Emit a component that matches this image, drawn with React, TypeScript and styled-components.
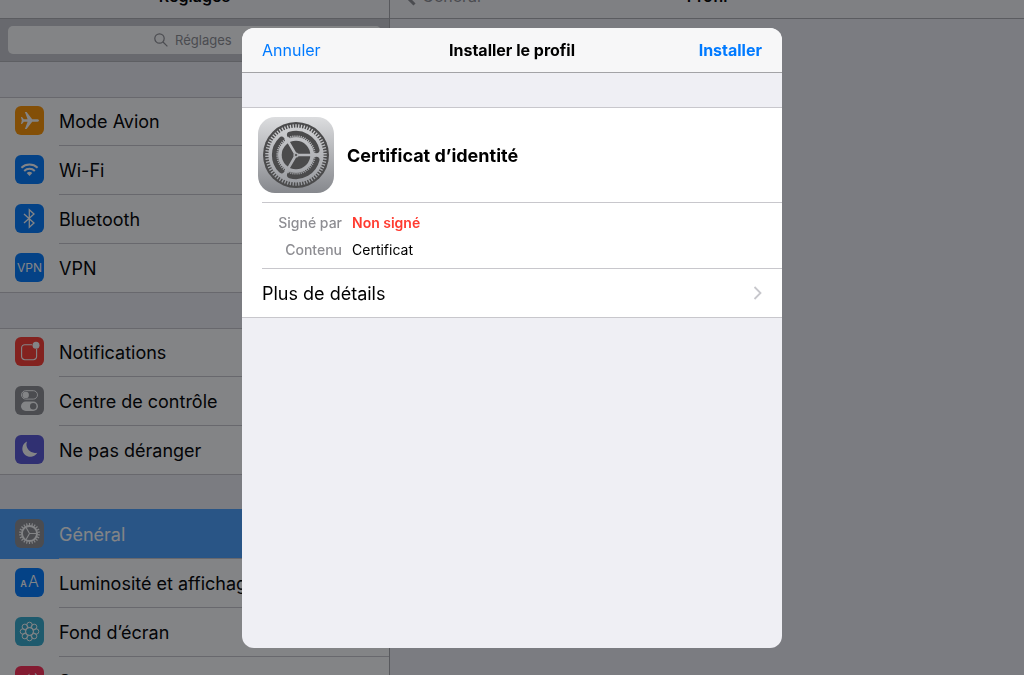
import React from "react";
import styled, { createGlobalStyle } from "styled-components";

const GlobalStyle = createGlobalStyle`
  *, *::before, *::after { box-sizing: border-box; }
  html, body, #root { height: 100%; }
  body {
    margin: 0;
    overflow: hidden;
    background: #efeff4;
    color: #000;
    font-family: Inter, "Liberation Sans", sans-serif;
  }
  h1, h2, p, dl, dd, dt, ul { margin: 0; padding: 0; }
  button { font: inherit; border: 0; background: none; padding: 0; }
`;

const Screen = styled.div`
  display: flex;
  height: 100%;
  overflow: hidden;
`;

const Sidebar = styled.aside`
  flex: 0 0 390px;
  border-right: 1px solid #a8a8ad;
  overflow: hidden;
`;

const Detail = styled.main`
  flex: 1;
  min-width: 0;
`;

const TopBar = styled.header`
  display: grid;
  grid-template-columns: 1fr auto 1fr;
  grid-template-rows: 18px;
  align-items: end;
  height: 19px;
  overflow: hidden;
  background: #f7f7f8;
  border-bottom: 1px solid #aeaeb3;
`;

const TopTitle = styled.h2`
  grid-column: 2;
  font-size: 16px;
  line-height: 44px;
  font-weight: 600;
`;

const BackButton = styled.button`
  display: flex;
  align-items: center;
  gap: 6px;
  height: 44px;
  padding-left: 14px;
  color: #8e8e93;
  font-size: 16px;
`;

const SearchBar = styled.div`
  padding: 7px 8px;
  background: #c9c9ce;
  border-bottom: 1px solid #b4b4b9;
`;

const SearchField = styled.label`
  display: flex;
  align-items: center;
  justify-content: center;
  gap: 7px;
  height: 28px;
  border-radius: 5px;
  background: #fff;
`;

const SearchInput = styled.input`
  width: 60px;
  border: 0;
  padding: 0;
  outline: 0;
  background: none;
  font-family: inherit;
  font-size: 13px;
  line-height: 20px;
  &::placeholder { color: #8e8e93; opacity: 1; }
`;

const Group = styled.ul`
  list-style: none;
  margin-top: 35px;
  background: #fff;
  border-top: 1px solid #c8c7cc;
  border-bottom: 1px solid #c8c7cc;
`;

const RowLabel = styled.span`
  flex: 1;
  display: flex;
  align-items: center;
  border-bottom: 1px solid #c8c7cc;
  font-size: 18px;
  white-space: nowrap;
`;

const RowItem = styled.li`
  &:first-child { margin-top: -1px; }
  &:last-child { height: 48px; }
  &:last-child ${RowLabel} { border-bottom-color: transparent; }
`;

const RowLink = styled.a<{ $selected?: boolean }>`
  display: flex;
  height: 49px;
  padding-left: 15px;
  gap: 15px;
  text-decoration: none;
  color: ${(p) => (p.$selected ? "#fff" : "#000")};
  background: ${(p) => (p.$selected ? "#4ba1ff" : "transparent")};
  box-shadow: ${(p) => (p.$selected ? "0 -1px #4ba1ff" : "none")};
`;

const IconTile = styled.span<{ $color: string }>`
  flex: none;
  display: grid;
  place-items: center;
  width: 29px;
  height: 29px;
  margin-top: 9px;
  border-radius: 6px;
  background: ${(p) => p.$color};
  color: #fff;
  font-size: 12px;
  svg { display: block; }
`;

const Backdrop = styled.div`
  position: fixed;
  inset: 0;
  display: flex;
  justify-content: center;
  align-items: flex-start;
  padding: 28px 16px 27px;
  background: rgba(8, 10, 14, 0.5);
`;

const Dialog = styled.section`
  width: 100%;
  max-width: 540px;
  height: 100%;
  max-height: 620px;
  overflow: hidden;
  border-radius: 12px;
  background: #efeff4;
`;

const DialogBar = styled.header`
  display: grid;
  grid-template-columns: 1fr auto 1fr;
  align-items: center;
  height: 45px;
  padding: 0 20px;
  background: #f7f7f8;
  border-bottom: 1px solid #a3a3a6;
`;

const DialogTitle = styled.h1`
  font-size: 16px;
  font-weight: 700;
`;

const BarButton = styled.button<{ $strong?: boolean }>`
  justify-self: ${(p) => (p.$strong ? "end" : "start")};
  color: #007aff;
  font-size: 16px;
  font-weight: ${(p) => (p.$strong ? 700 : 400)};
`;

const Card = styled.div`
  margin-top: 34px;
  padding-left: 20px;
  background: #fff;
  border-top: 1px solid #c8c7cc;
  border-bottom: 1px solid #c8c7cc;
`;

const ProfileHead = styled.div`
  display: flex;
  align-items: center;
  gap: 13px;
  height: 94px;
  margin-left: -4px;
  svg { flex: none; }
`;

const ProfileName = styled.h2`
  font-size: 18px;
  font-weight: 700;
`;

const Facts = styled.dl`
  display: grid;
  grid-template-columns: 80px 1fr;
  column-gap: 10px;
  row-gap: 7px;
  padding: 10px 0 8px;
  border-top: 1px solid #c8c7cc;
  border-bottom: 1px solid #c8c7cc;
  font-size: 14px;
  line-height: 20px;
`;

const FactName = styled.dt`
  text-align: right;
  font-weight: 500;
  color: #8e8e93;
`;

const FactValue = styled.dd<{ $alert?: boolean }>`
  font-weight: ${(p) => (p.$alert ? 600 : 400)};
  color: ${(p) => (p.$alert ? "#ff3b30" : "#000")};
`;

const MoreButton = styled.button`
  display: flex;
  align-items: center;
  justify-content: space-between;
  width: 100%;
  height: 48px;
  padding-right: 20px;
  font-size: 18px;
  color: #000;
`;

const ring = (n: number, r1: number, r2: number, c: number, phase = 0) =>
  Array.from({ length: n }, (_, i) => {
    const a = ((i + phase) / n) * Math.PI * 2;
    const x = Math.cos(a);
    const y = Math.sin(a);
    return `M${(c + x * r1).toFixed(2)} ${(c + y * r1).toFixed(2)}L${(c + x * r2).toFixed(2)} ${(c + y * r2).toFixed(2)}`;
  }).join("");

const arc = (r: number, from: number, to: number, c: number) => {
  const p = (d: number) => {
    const a = (d * Math.PI) / 180;
    return `${(c + Math.cos(a) * r).toFixed(2)} ${(c + Math.sin(a) * r).toFixed(2)}`;
  };
  return `M${p(from)}A${r} ${r} 0 0 1 ${p(to)}`;
};

const SettingsLogo = () => (
  <svg width="76" height="76" viewBox="0 0 76 76" aria-hidden="true">
    <defs>
      <linearGradient id="plate" x1="0" y1="0" x2="0" y2="1">
        <stop offset="0" stopColor="#dcdddf" />
        <stop offset="1" stopColor="#86888d" />
      </linearGradient>
      <linearGradient id="metal" gradientUnits="userSpaceOnUse" x1="0" y1="5" x2="0" y2="71">
        <stop offset="0" stopColor="#d2d3d5" />
        <stop offset="1" stopColor="#96989d" />
      </linearGradient>
    </defs>
    <rect width="76" height="76" rx="17" fill="url(#plate)" />
    <circle cx="38" cy="38" r="33" fill="#4b4b4c" />
    <path d={ring(66, 26, 30.8, 38, 0.5)} stroke="url(#metal)" strokeWidth="1.3" />
    <circle cx="38" cy="38" r="27.6" fill="url(#metal)" />
    <g fill="none" stroke="#4b4b4c" strokeWidth="6.6" strokeLinecap="round">
      <path d={arc(20.8, 14, 106, 38)} />
      <path d={arc(20.8, 134, 226, 38)} />
      <path d={arc(20.8, 254, 346, 38)} />
    </g>
    <path d={ring(56, 16, 19.6, 38, 0.5)} stroke="url(#metal)" strokeWidth="1.1" />
    <circle cx="38" cy="38" r="15.9" fill="none" stroke="url(#metal)" strokeWidth="3.4" />
    <circle cx="38" cy="38" r="14.3" fill="#4b4b4c" />
    <path d={ring(3, 0, 23, 38)} stroke="url(#metal)" strokeWidth="2.6" />
    <circle cx="38" cy="38" r="2.6" fill="#a9abae" />
    <circle cx="38" cy="38" r="1.1" fill="#4b4b4c" />
  </svg>
);

const Airplane = () => (
  <svg width="29" height="29" viewBox="0 0 29 29" fill="#fff">
    <path d="M24 14.5c0-.9-1-1.3-2.2-1.3h-4.6L11.600 6H9.900l2.700 7.200H8.800L7 11H6l.8 3.500L6 18h1l1.800-2.200h3.800L9.900 23h1.700l5.600-7.200h4.600c1.200 0 2.200-.4 2.200-1.300z" />
  </svg>
);

const Wifi = () => (
  <svg width="29" height="29" viewBox="0 0 29 29" fill="none" stroke="#fff" strokeWidth="2">
    <path d="M6.400 12.800a11.800 11.800 0 0 1 16.200 0" />
    <path d="M9.200 15.900a7.700 7.700 0 0 1 10.600 0" />
    <path d="M14.500 20.900l-2.800-2.900a4.200 4.200 0 0 1 5.600 0z" fill="#fff" stroke="none" />
  </svg>
);

const Bluetooth = () => (
  <svg width="29" height="29" viewBox="0 0 29 29" fill="none" stroke="#fff" strokeWidth="1.300">
    <path d="M9 9.900l10 9.200-4.700 4.100V5.800l4.700 4.100L9 19.100" />
  </svg>
);

const Notifications = () => (
  <svg width="29" height="29" viewBox="0 0 29 29" fill="none">
    <path d="M17 7.700h-7.200a3.200 3.200 0 0 0-3.200 3.200v8.600a3.200 3.200 0 0 0 3.200 3.200h8.600a3.200 3.200 0 0 0 3.200-3.200V12" stroke="#fff" strokeWidth="1.100" />
    <circle cx="21" cy="8.300" r="3.500" fill="#fff" />
  </svg>
);

const Toggles = () => (
  <svg width="29" height="29" viewBox="0 0 29 29">
    <rect x="6.500" y="4.700" width="16" height="8.400" rx="4.200" fill="none" stroke="#fff" />
    <circle cx="10.700" cy="8.900" r="3.200" fill="#fff" />
    <rect x="6" y="15.500" width="17" height="9.500" rx="4.750" fill="#fff" />
    <circle cx="18.200" cy="20.200" r="3.200" fill="#8e8e93" />
  </svg>
);

const Moon = () => (
  <svg width="29" height="29" viewBox="0 0 29 29" fill="#fff">
    <path d="M12 6.500a8 8 0 1 0 10.300 11.200A8.600 8.600 0 0 1 12 6.500z" />
  </svg>
);

const Gear = () => (
  <svg width="29" height="29" viewBox="0 0 29 29" fill="none" stroke="#fff">
    <circle cx="14.500" cy="14.500" r="7.500" strokeWidth="1.900" />
    <path d={ring(22, 8, 10.6, 14.5, 0.5)} strokeWidth="1.200" />
    <path d={ring(3, 0, 7.5, 14.5)} strokeWidth="1.100" />
  </svg>
);

const TextSizes = styled.span`
  display: flex;
  align-items: baseline;
  gap: 1px;
  line-height: 20px;
  font-weight: 600;
  font-size: 9px;
`;

const LargeLetter = styled.span`
  font-size: 16px;
  font-weight: 300;
`;

const Flower = () => (
  <svg width="29" height="29" viewBox="0 0 29 29" fill="none" stroke="#fff">
    {Array.from({ length: 8 }, (_, i) => {
      const a = (i * Math.PI) / 4;
      return <circle key={i} cx={14.5 + Math.cos(a) * 6.6} cy={14.5 + Math.sin(a) * 6.6} r="2.700" />;
    })}
    <circle cx="14.500" cy="14.500" r="3.900" />
  </svg>
);

const Speaker = () => (
  <svg width="29" height="29" viewBox="0 0 29 29" fill="none" stroke="#fff" strokeWidth="1.400">
    <path d="M6 12h3.500l5-4.500v14l-5-4.500H6z" fill="#fff" stroke="none" />
    <path d="M17 11a5 5 0 0 1 0 7M20 7.500a10 10 0 0 1 0 14" />
  </svg>
);

type Entry = { label: string; color: string; icon: React.ReactNode; selected?: boolean };

const groups: Entry[][] = [
  [
    { label: "Mode Avion", color: "#ff9500", icon: <Airplane /> },
    { label: "Wi-Fi", color: "#007aff", icon: <Wifi /> },
    { label: "Bluetooth", color: "#007aff", icon: <Bluetooth /> },
    { label: "VPN", color: "#007aff", icon: "VPN" },
  ],
  [
    { label: "Notifications", color: "#ff3b30", icon: <Notifications /> },
    { label: "Centre de contrôle", color: "#8e8e93", icon: <Toggles /> },
    { label: "Ne pas déranger", color: "#5856d6", icon: <Moon /> },
  ],
  [
    { label: "Général", color: "#8e8e93", icon: <Gear />, selected: true },
    {
      label: "Luminosité et affichage",
      color: "#007aff",
      icon: (
        <TextSizes>
          A<LargeLetter>A</LargeLetter>
        </TextSizes>
      ),
    },
    { label: "Fond d’écran", color: "#35aacd", icon: <Flower /> },
    { label: "Sons", color: "#ff2d55", icon: <Speaker /> },
  ],
];

export default function App() {
  return (
    <>
      <GlobalStyle />
      <Screen>
        <Sidebar>
          <TopBar>
            <TopTitle>Réglages</TopTitle>
          </TopBar>
          <SearchBar>
            <SearchField>
              <svg width="14" height="14" viewBox="0 0 14 14" fill="none" stroke="#8e8e93" strokeWidth="1.200">
                <circle cx="5.500" cy="5.500" r="4.700" />
                <path d="M9 9l4.400 4.400" />
              </svg>
              <SearchInput type="text" placeholder="Réglages" aria-label="Réglages" />
            </SearchField>
          </SearchBar>
          <nav>
            {groups.map((entries, g) => (
              <Group key={g}>
                {entries.map((e) => (
                  <RowItem key={e.label}>
                    <RowLink href="#" $selected={e.selected}>
                      <IconTile $color={e.color}>{e.icon}</IconTile>
                      <RowLabel>{e.label}</RowLabel>
                    </RowLink>
                  </RowItem>
                ))}
              </Group>
            ))}
          </nav>
        </Sidebar>
        <Detail>
          <TopBar>
            <BackButton>
              <svg width="12" height="20" viewBox="0 0 12 20" fill="none" stroke="currentColor" strokeWidth="3">
                <path d="M10.500 1.500L2 10l8.500 8.500" />
              </svg>
              Général
            </BackButton>
            <TopTitle>Profil</TopTitle>
          </TopBar>
        </Detail>
      </Screen>
      <Backdrop>
        <Dialog role="dialog" aria-modal="true" aria-labelledby="dialog-title">
          <DialogBar>
            <BarButton>Annuler</BarButton>
            <DialogTitle id="dialog-title">Installer le profil</DialogTitle>
            <BarButton $strong>Installer</BarButton>
          </DialogBar>
          <Card>
            <ProfileHead>
              <SettingsLogo />
              <ProfileName>Certificat d’identité</ProfileName>
            </ProfileHead>
            <Facts>
              <FactName>Signé par</FactName>
              <FactValue $alert>Non signé</FactValue>
              <FactName>Contenu</FactName>
              <FactValue>Certificat</FactValue>
            </Facts>
            <MoreButton>
              Plus de détails
              <svg width="9" height="14" viewBox="0 0 9 14" fill="none" stroke="#c7c7cc" strokeWidth="1.800">
                <path d="M1.500 1l6 6-6 6" />
              </svg>
            </MoreButton>
          </Card>
        </Dialog>
      </Backdrop>
    </>
  );
}
